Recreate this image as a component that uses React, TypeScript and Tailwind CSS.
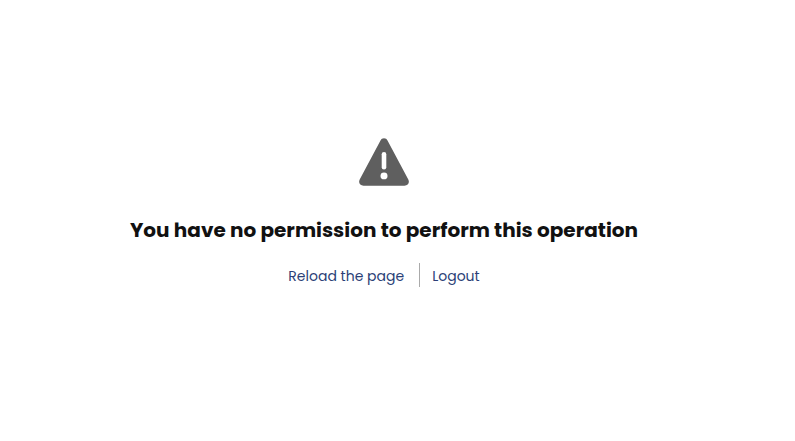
function WarningIcon() {
  return (
    <svg width="50" height="48" viewBox="0 0 50 48" fill="none" aria-hidden="true">
      <path
        d="M21.5 2.4C22.2 1 23.4.3 25 .3s2.800.7 3.500 2.100L49.300 41.600C50.900 44.800 49 47.800 45.500 47.800H4.500C1 47.800-.9 44.800.7 41.600Z"
        fill="#5f5f5f"
      />
      <rect x="22.700" y="14" width="4.600" height="17.500" rx="2.300" fill="white" />
      <ellipse cx="25" cy="37.900" rx="3.500" ry="3.400" fill="white" />
    </svg>
  );
}

export default function App() {
  return (
    <main className="flex h-[441px] w-[768px] flex-col items-center bg-white pt-[138px] font-['Poppins','Inter',sans-serif]">
      <WarningIcon />
      <h1 className="mt-7 text-[20px] leading-8 font-bold whitespace-nowrap text-[#111111]">
        You have no permission to perform this operation
      </h1>
      <nav className="mt-[17px] flex h-6 items-center text-[14px] leading-6 whitespace-nowrap text-[#2b3f77]">
        <a href="#" className="pt-0.5 pr-[15px]">Reload the page</a>
        <span className="h-6 w-px bg-[#aaaaaa]" />
        <a href="#" className="pt-0.5 pl-3">Logout</a>
      </nav>
    </main>
  );
}
